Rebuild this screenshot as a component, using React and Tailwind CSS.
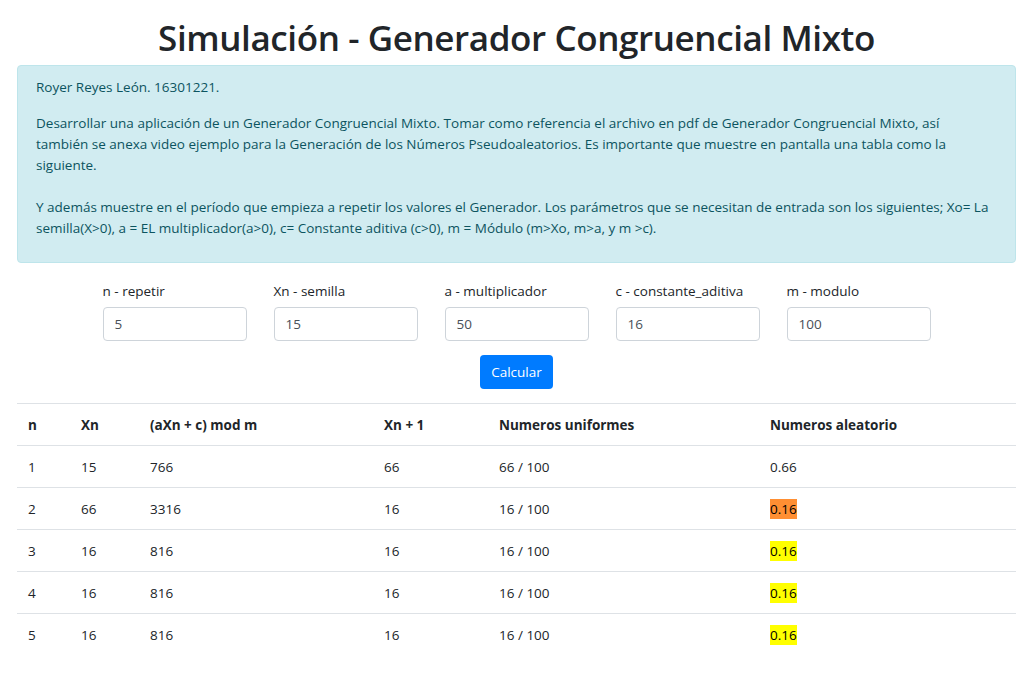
const inputs = [
  { label: 'n - repetir', value: '5' },
  { label: 'Xn - semilla', value: '15' },
  { label: 'a - multiplicador', value: '50' },
  { label: 'c - constante_aditiva', value: '16' },
  { label: 'm - modulo', value: '100' },
];

const rows = [
  { n: 1, xn: 15, mod: 766, next: 66, uni: '66 / 100', rand: '0.66', mark: null },
  { n: 2, xn: 66, mod: 3316, next: 16, uni: '16 / 100', rand: '0.16', mark: 'bg-[#ff8f33]' },
  { n: 3, xn: 16, mod: 816, next: 16, uni: '16 / 100', rand: '0.16', mark: 'bg-[#ffff00]' },
  { n: 4, xn: 16, mod: 816, next: 16, uni: '16 / 100', rand: '0.16', mark: 'bg-[#ffff00]' },
  { n: 5, xn: 16, mod: 816, next: 16, uni: '16 / 100', rand: '0.16', mark: 'bg-[#ffff00]' },
];

const headers = [
  { label: 'n', w: 'w-[53px]' },
  { label: 'Xn', w: 'w-[69px]' },
  { label: '(aXn + c) mod m', w: 'w-[234px]' },
  { label: 'Xn + 1', w: 'w-[115px]' },
  { label: 'Numeros uniformes', w: 'w-[271px]' },
  { label: 'Numeros aleatorio', w: '' },
];

export default function App() {
  return (
    <div className="min-h-[685px] bg-white pl-[17px] pr-[19px] font-['Open_Sans',sans-serif] text-[14px] leading-[21px] text-[#212529]">
      {/* Title */}
      <h1 className="pt-[16px] pb-[6px] text-center text-[35px] font-semibold leading-[43px] tracking-[-0.4px]">
        Simulación - Generador Congruencial Mixto
      </h1>

      {/* Description */}
      <div className="mb-[16px] h-[198px] rounded-[4px] border border-[#bee5eb] bg-[#d1ecf1] px-[18px] py-[11px] text-[13.5px] text-[#0c5460]">
        <p className="mb-[15px]">Royer Reyes León. 16301221.</p>
        <p className="whitespace-nowrap">
          Desarrollar una aplicación de un Generador Congruencial Mixto. Tomar como referencia el archivo en pdf de Generador Congruencial Mixto, así
          <br />
          también se anexa video ejemplo para la Generación de los Números Pseudoaleatorios. Es importante que muestre en pantalla una tabla como la
          <br />
          siguiente.
          <br />
          <br />
          Y además muestre en el período que empieza a repetir los valores el Generador. Los parámetros que se necesitan de entrada son los siguientes; Xo= La
          <br />
          semilla(X&gt;0), a = EL multiplicador(a&gt;0), c= Constante aditiva (c&gt;0), m = Módulo (m&gt;Xo, m&gt;a, y m &gt;c).
        </p>
      </div>

      {/* Inputs */}
      <div className="flex justify-center gap-[27px] pt-[2px]">
        {inputs.map((f) => (
          <div key={f.label} className="w-[144px]">
            <label className="mb-[5px] block text-[13.5px]">{f.label}</label>
            <div className="flex h-[34px] items-center rounded-[4px] border border-[#ced4da] px-[11px] text-[13.5px] text-[#495057]">
              {f.value}
            </div>
          </div>
        ))}
      </div>

      <div className="flex justify-center pt-[14px] pb-[14px]">
        <button className="h-[34px] w-[73px] rounded-[4px] bg-[#007bff] text-[13.5px] text-white">
          Calcular
        </button>
      </div>

      {/* Results */}
      <table className="w-full border-collapse text-left text-[13.5px]">
        <thead>
          <tr>
            {headers.map((h) => (
              <th
                key={h.label}
                className={`${h.w} h-[42px] border-t border-b border-[#dee2e6] px-[11px] pt-[2px] align-middle font-bold`}
              >
                {h.label}
              </th>
            ))}
          </tr>
        </thead>
        <tbody>
          {rows.map((r, i) => (
            <tr key={r.n}>
              {[r.n, r.xn, r.mod, r.next, r.uni].map((v, j) => (
                <td
                  key={j}
                  className={`h-[42px] px-[11px] pt-[1px] align-middle ${i < rows.length - 1 ? 'border-b border-[#dee2e6]' : ''}`}
                >
                  {v}
                </td>
              ))}
              <td className={`h-[42px] px-[11px] pt-[1px] align-middle ${i < rows.length - 1 ? 'border-b border-[#dee2e6]' : ''}`}>
                {r.mark ? (
                  <span className={`${r.mark} inline-block leading-[20px] text-black`}>{r.rand}</span>
                ) : (
                  r.rand
                )}
              </td>
            </tr>
          ))}
        </tbody>
      </table>
    </div>
  );
}
